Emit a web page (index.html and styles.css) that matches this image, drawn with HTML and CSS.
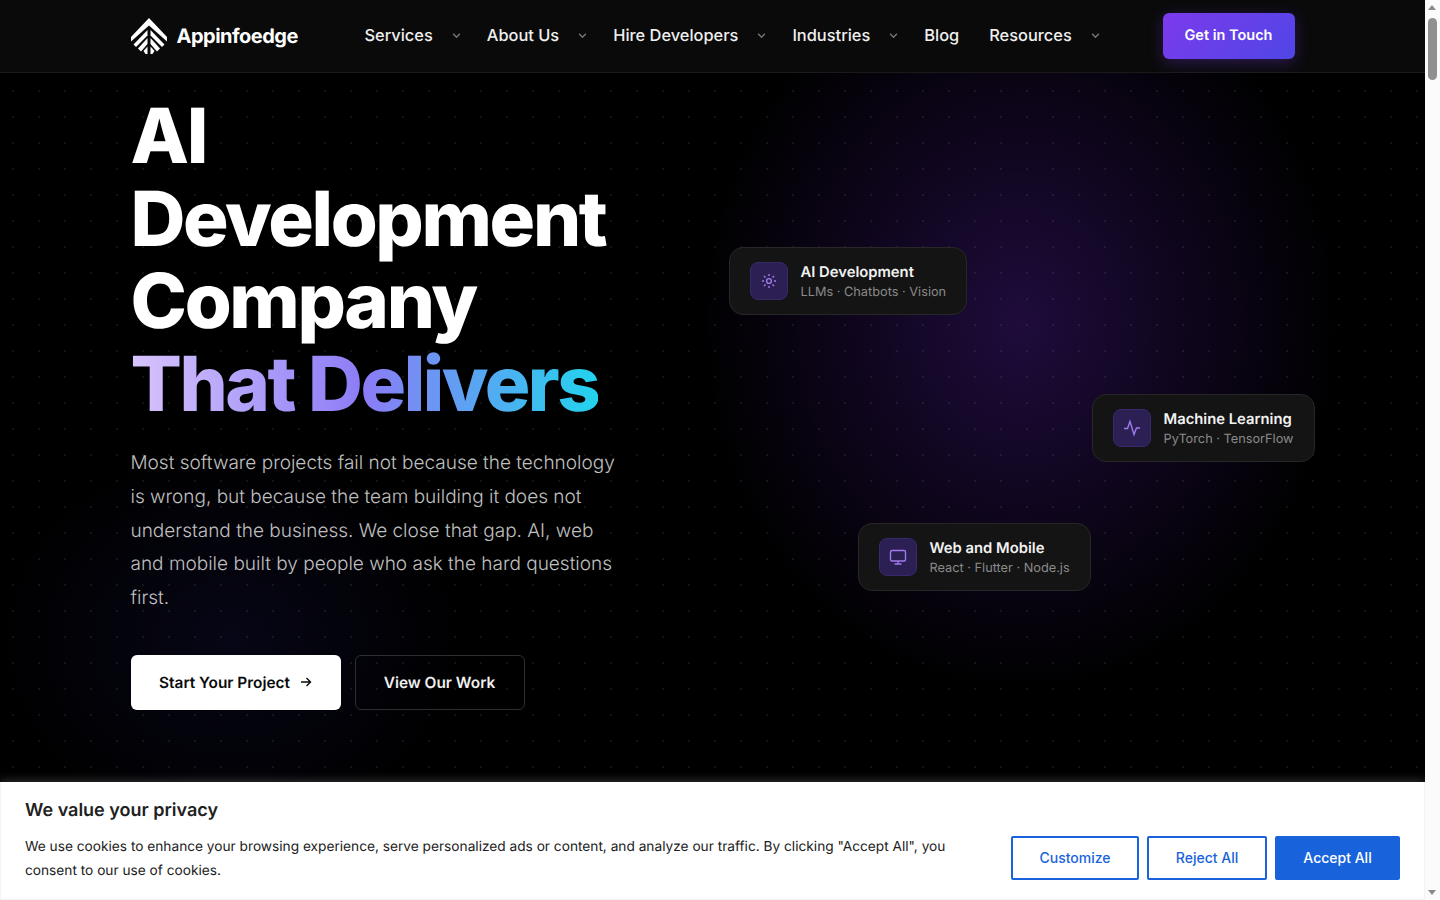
FILE: index.html
```html
<!DOCTYPE html>
<html lang="en">

<head>
    <meta charset="UTF-8">
    <meta name="viewport" content="width=device-width, initial-scale=1.0">
    <title>Appinfoedge</title>
    <link rel="stylesheet" href="styles.css">
</head>

<body>

    <div class="page">
        <header class="navbar">
            <div class="container nav-inner">
                <a class="logo" href="#">
                    <svg class="logo-mark" viewBox="0 0 36 36" fill="#ffffff">
                        <polygon points="18,0 36,19 36,23.5 18,7.5 0,23.5 0,19" />
                        <polygon points="16.5,12 16.5,17.5 5,29 2.5,26.5" />
                        <polygon points="19.5,12 19.5,17.5 31,29 33.5,26.5" />
                        <polygon points="16.5,20 16.5,26 10,33.5 7,30.5" />
                        <polygon points="19.5,20 19.5,26 26,33.5 29,30.5" />
                        <polygon points="16.5,28.5 16.5,36 14.5,36 12.5,33" />
                        <polygon points="19.5,28.5 19.5,36 21.5,36 23.5,33" />
                    </svg>
                    <span class="logo-text">Appinfoedge</span>
                </a>
                <nav class="nav-links">
                    <a class="nav-link" href="#">Services <svg class="caret" viewBox="0 0 8 8"><path d="M1 2.5 4 5.5 7 2.5" /></svg></a>
                    <a class="nav-link" href="#">About Us <svg class="caret" viewBox="0 0 8 8"><path d="M1 2.5 4 5.5 7 2.5" /></svg></a>
                    <a class="nav-link" href="#">Hire Developers <svg class="caret" viewBox="0 0 8 8"><path d="M1 2.5 4 5.5 7 2.5" /></svg></a>
                    <a class="nav-link" href="#">Industries <svg class="caret" viewBox="0 0 8 8"><path d="M1 2.5 4 5.5 7 2.5" /></svg></a>
                    <a class="nav-link" href="#">Blog</a>
                    <a class="nav-link" href="#">Resources <svg class="caret" viewBox="0 0 8 8"><path d="M1 2.5 4 5.5 7 2.5" /></svg></a>
                </nav>
                <a class="nav-cta" href="#">Get in Touch</a>
            </div>
        </header>

        <main class="hero">
            <div class="container hero-inner">
                <div class="hero-copy">
                    <h1 class="hero-title">AI<br>Development<br>Company<br><span class="gradient-text">That Delivers</span></h1>
                    <p class="hero-text">Most software projects fail not because the technology is wrong, but because the team building it does not understand the business. We close that gap. AI, web and mobile built by people who ask the hard questions first.</p>
                    <div class="hero-actions">
                        <a class="btn btn-white" href="#">Start Your Project
                            <svg class="arrow" viewBox="0 0 12 12"><path d="M1 6H10.5M6.5 2 10.5 6 6.5 10" /></svg>
                        </a>
                        <a class="btn btn-outline" href="#">View Our Work</a>
                    </div>
                </div>

                <div class="hero-visual">
                    <div class="float-card card-ai">
                        <div class="card-icon">
                            <svg viewBox="0 0 18 18"><circle cx="9" cy="9" r="2.4" /><path d="M9 2V4M9 14V16M2 9H4M14 9H16M4 4 5.5 5.5M12.5 12.5 14 14M4 14 5.5 12.5M12.5 5.5 14 4" /></svg>
                        </div>
                        <div class="card-body">
                            <div class="card-title">AI Development</div>
                            <div class="card-sub">LLMs · Chatbots · Vision</div>
                        </div>
                    </div>
                    <div class="float-card card-ml">
                        <div class="card-icon">
                            <svg viewBox="0 0 18 18"><path d="M1 9.5H4.5L7 2.5 11 15.5 13.5 9H17" /></svg>
                        </div>
                        <div class="card-body">
                            <div class="card-title">Machine Learning</div>
                            <div class="card-sub">PyTorch · TensorFlow</div>
                        </div>
                    </div>
                    <div class="float-card card-web">
                        <div class="card-icon">
                            <svg viewBox="0 0 18 18"><rect x="1.5" y="2.5" width="15" height="10.5" rx="1.5" /><path d="M9 13V16M5.5 16H12.5" /></svg>
                        </div>
                        <div class="card-body">
                            <div class="card-title">Web and Mobile</div>
                            <div class="card-sub">React · Flutter · Node.js</div>
                        </div>
                    </div>
                </div>
            </div>
        </main>

        <div class="cookie-bar">
            <div class="cookie-title">We value your privacy</div>
            <div class="cookie-row">
                <p class="cookie-text">We use cookies to enhance your browsing experience, serve personalized ads or content, and analyze our traffic. By clicking "Accept All", you consent to our use of cookies.</p>
                <div class="cookie-btns">
                    <button class="cookie-btn customize">Customize</button>
                    <button class="cookie-btn reject">Reject All</button>
                    <button class="cookie-btn accept">Accept All</button>
                </div>
            </div>
        </div>
    </div>

    <div class="scrollbar">
        <span class="scroll-up"></span>
        <span class="scroll-thumb"></span>
        <span class="scroll-down"></span>
    </div>

</body>

</html>
```

FILE: styles.css
```css
* {
    box-sizing: border-box;
}

body {
    display: flex;
    height: 100vh;
    margin: 0;
    overflow: hidden;
    background-color: #000000;
    color: #ffffff;
    font-family: Inter, "Liberation Sans", sans-serif;
    text-rendering: geometricPrecision;
}

a {
    color: inherit;
    text-decoration: none;
}

.page {
    display: flex;
    flex-direction: column;
    flex: 1;
    min-width: 0;
}

.container {
    width: 1164px;
    margin: 0 auto;
}

/* nav */
.navbar {
    height: 73px;
    flex-shrink: 0;
    background-color: #0a0a0a;
    border-bottom: 1px solid #1a1a1a;
}

.nav-inner {
    display: flex;
    align-items: center;
    height: 72px;
}

.logo {
    display: flex;
    align-items: center;
    gap: 10px;
    width: 234px;
}

.logo-mark {
    width: 36px;
    height: 36px;
}

.logo-text {
    font-size: 20px;
    font-weight: 700;
    letter-spacing: -0.5px;
}

.nav-links {
    display: flex;
    align-items: center;
    gap: 30px;
    flex: 1;
    padding-bottom: 2px;
}

.nav-link {
    display: flex;
    align-items: center;
    gap: 19px;
    font-size: 16.4px;
    font-weight: 500;
    color: #f0f0f0;
}

.caret {
    width: 9px;
    height: 9px;
    margin-right: -4px;
    fill: none;
    stroke: #777777;
    stroke-width: 1.2;
}

.nav-cta {
    display: flex;
    align-items: center;
    justify-content: center;
    width: 132px;
    height: 46px;
    padding-bottom: 2px;
    border-radius: 6px;
    background: linear-gradient(135deg, #7c3aed, #4f46e5);
    box-shadow: 0 4px 16px rgba(124, 58, 237, 0.3);
    font-size: 14.5px;
    font-weight: 600;
}

/* hero */
.hero {
    flex: 1;
    min-height: 0;
    overflow: hidden;
    padding-top: 22px;
    background-color: #000000;
    background-image:
        radial-gradient(circle at 13px 18px, rgba(255, 255, 255, 0.07) 1px, transparent 1px),
        radial-gradient(ellipse 320px 370px at 1020px 250px, rgba(76, 29, 149, 0.4), transparent 100%),
        radial-gradient(ellipse 240px 200px at 230px 567px, rgba(30, 27, 100, 0.22), transparent 100%);
    background-size: 26px 26px, 100% 100%, 100% 100%;
}

.hero-inner {
    display: flex;
    position: relative;
}

.hero-copy {
    width: 490px;
}

.hero-title {
    margin: 0;
    font-size: 76px;
    font-weight: 800;
    line-height: 82.5px;
    letter-spacing: -2.35px;
}

.gradient-text {
    display: inline-block;
    letter-spacing: -2.5px;
    background: linear-gradient(90deg, #d8c4fd 0%, #8b7cf6 50%, #22d3ee 100%);
    -webkit-background-clip: text;
    background-clip: text;
    color: transparent;
}

.hero-text {
    margin: 21px 0 0;
    font-size: 19px;
    line-height: 33.75px;
    font-weight: 300;
    color: #c0c0c0;
}

.hero-actions {
    display: flex;
    gap: 14px;
    margin-top: 40px;
}

.btn {
    display: flex;
    align-items: center;
    justify-content: center;
    height: 55px;
    border-radius: 6px;
    font-size: 15.4px;
    font-weight: 600;
}

.btn-white {
    width: 210px;
    gap: 10px;
    background-color: #ffffff;
    color: #0a0a0a;
}

.btn-outline {
    width: 170px;
    border: 1px solid #2e2e2e;
    color: #f0f0f0;
}

.arrow {
    width: 12px;
    height: 12px;
    fill: none;
    stroke: #0a0a0a;
    stroke-width: 1.4;
}

/* floating cards sit on a free canvas */
.hero-visual {
    flex: 1;
}

.float-card {
    position: absolute;
    display: flex;
    align-items: center;
    gap: 13px;
    height: 68px;
    padding: 0 20px;
    white-space: nowrap;
    background-color: #141414;
    border: 1px solid #272727;
    border-radius: 14px;
}

.card-ai {
    left: 598px;
    top: 152px;
}

.card-ml {
    left: 961px;
    top: 299px;
}

.card-web {
    left: 727px;
    top: 428px;
}

.card-icon {
    display: flex;
    align-items: center;
    justify-content: center;
    width: 38px;
    height: 38px;
    background-color: #2c1f54;
    border: 1px solid #38296a;
    border-radius: 8px;
}

.card-icon svg {
    width: 18px;
    height: 18px;
    fill: none;
    stroke: #9f7aea;
    stroke-width: 1.4;
}

.card-body {
    padding-top: 2px;
}

.card-title {
    padding-top: 1px;
    font-size: 14.8px;
    font-weight: 600;
    line-height: 20px;
    color: #f2f2f2;
}

.card-sub {
    padding-top: 1px;
    font-size: 12.75px;
    line-height: 20px;
    color: #8a8a8a;
}

/* cookie bar */
.cookie-bar {
    height: 118px;
    flex-shrink: 0;
    padding: 18px 24px 0;
    background-color: #ffffff;
    border: 1px solid #f4f4f4;
    border-top: none;
    box-shadow: 0 -1px 10px rgba(172, 171, 171, 0.3);
    color: #212121;
}

.cookie-title {
    font-size: 18px;
    font-weight: 600;
    line-height: 22px;
}

.cookie-row {
    display: flex;
    justify-content: space-between;
    margin-top: 13px;
}

.cookie-text {
    width: 940px;
    margin: 0;
    font-size: 13.7px;
    line-height: 24px;
}

.cookie-btns {
    display: flex;
    gap: 8px;
    margin-top: 1px;
}

.cookie-btn {
    height: 44px;
    padding-bottom: 2px;
    border: 2px solid #1863dc;
    border-radius: 2px;
    background-color: #ffffff;
    color: #1863dc;
    font-family: inherit;
    font-size: 14px;
    font-weight: 500;
}

.customize {
    width: 128px;
}

.reject {
    width: 120px;
}

.accept {
    width: 125px;
    background-color: #1863dc;
    color: #ffffff;
}

/* scrollbar */
.scrollbar {
    position: relative;
    width: 15px;
    flex-shrink: 0;
    background-color: #fbfbfb;
}

.scroll-thumb {
    position: absolute;
    left: 3px;
    top: 18px;
    width: 9px;
    height: 62px;
    border-radius: 5px;
    background-color: #909090;
}

.scroll-up,
.scroll-down {
    position: absolute;
    left: 3px;
    width: 0;
    height: 0;
    border-left: 4.5px solid transparent;
    border-right: 4.5px solid transparent;
}

.scroll-up {
    top: 5px;
    border-bottom: 5px solid #8a8a8a;
}

.scroll-down {
    bottom: 5px;
    border-top: 5px solid #8a8a8a;
}
```
